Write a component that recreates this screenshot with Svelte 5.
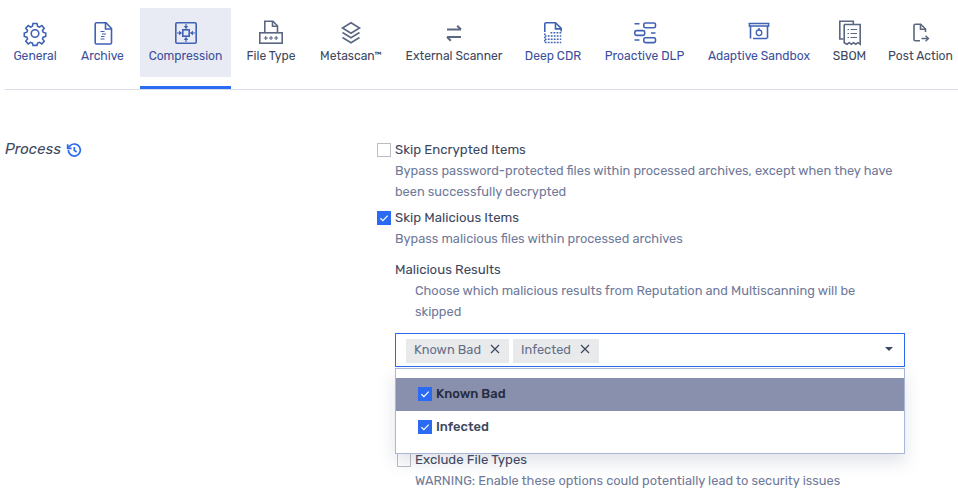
<script lang="ts">
    let tabs = [
        { label: "General", icon: "gear", blue: true },
        { label: "Archive", icon: "archive", blue: true },
        { label: "Compression", icon: "compress", blue: true, active: true },
        { label: "File Type", icon: "filetype" },
        { label: "Metascan™", icon: "layers" },
        { label: "External Scanner", icon: "swap" },
        { label: "Deep CDR", icon: "cdr", blue: true },
        { label: "Proactive DLP", icon: "dlp", blue: true },
        { label: "Adaptive Sandbox", icon: "sandbox", blue: true },
        { label: "SBOM", icon: "sbom" },
        { label: "Post Action", icon: "post" },
    ];

    let selected = ["Known Bad", "Infected"];
</script>

{#snippet check(on: boolean)}
    <span class="box" class:on>
        {#if on}
            <svg viewBox="0 0 14 14" width="14" height="14"><path d="M3.4 7.2l2.5 2.4 4.8-5" fill="none" stroke="#fff" stroke-width="1.2" /></svg>
        {/if}
    </span>
{/snippet}

{#snippet tabIcon(name: string)}
    <svg viewBox="0 0 24 24" width="24" height="24" fill="none" stroke="currentColor" stroke-width="1.6">
        {#if name === "gear"}
            <path d="M10 2.500h4l.6 2.800 1.800.8 2.400-1.600 2.400 2.800-1.700 2.200.6 1.700 2.600.8v3.400l-2.600.8-.6 1.700 1.700 2.200-2.400 2.800-2.400-1.600-1.800.8-.6 2.300h-4l-.6-2.300-1.800-.8-2.400 1.600-2.400-2.800 1.700-2.200-.6-1.700-2.600-.8v-3.400l2.600-.8.6-1.700-1.700-2.200 2.400-2.800 2.400 1.600 1.800-.8z" />
            <circle cx="12" cy="12.500" r="3.800" />
        {:else if name === "archive"}
            <path d="M5.500 1.800h9.500l5.500 5.700v14.200a1.300 1.300 0 0 1-1.300 1.300H5.500a1.300 1.300 0 0 1-1.300-1.300V3.100a1.300 1.300 0 0 1 1.300-1.300z" />
            <path d="M14.500 1.800v6.200h6" />
            <path d="M9.500 10.500h4M11 13h4M10 15.500h3.500M9.500 18h4" stroke-width="1.200" />
        {:else if name === "compress"}
            <rect x="1.800" y="1.800" width="20.400" height="20.400" rx="1.200" />
            <rect x="8.800" y="8.800" width="6.400" height="6.400" />
            <path d="M3 12h2M19 12h2M12 3v2M12 19v2" stroke-width="1.200" />
            <path d="M8.200 12L5 9.800v4.400zM15.800 12L19 9.800v4.400zM12 8.200L9.800 5h4.400zM12 15.800L9.800 19h4.400z" fill="currentColor" stroke="none" />
        {:else if name === "filetype"}
            <path d="M5.800 11.500V0.300h8.200l4.500 4.700v6.500" />
            <path d="M13.500 0.300v5h5" />
            <rect x="0.800" y="11.800" width="22.400" height="10.400" />
            <path d="M4.800 17h4M6.800 15v4M10 17h4M12 15v4M15.200 17h4M17.200 15v4" stroke-width="1.100" />
        {:else if name === "layers"}
            <path d="M12 1.800l8.500 5.200-8.500 5.200-8.500-5.200z" />
            <path d="M3.500 11.500l8.500 5.200 8.500-5.200M3.500 16.500l8.500 5.200 8.500-5.200" />
        {:else if name === "swap"}
            <path d="M5 8.500h14M15.200 4.700L19 8.500M5 16h14M5 16l3.800 3.800" stroke-width="2" />
        {:else if name === "cdr"}
            <path d="M3.800 11V3a1.300 1.300 0 0 1 1.300-1.300h9.400l5.700 5.700v3" />
            <path d="M14.500 1.700v6.200h6" />
            <path d="M9.500 11.800h11M3.800 15h16.400M3.800 18.200h16.400M3.800 21.500h16.400" stroke-dasharray="1.800 1.200" stroke-width="1.400" />
            <path d="M3.800 12.500v9" stroke-dasharray="1.600 1.600" />
        {:else if name === "dlp"}
            <path d="M1.500 2.800h5M18 12h4.500M1.500 19h5" />
            <rect x="10.800" y="2" width="11.700" height="4.800" rx="1.600" />
            <rect x="1.800" y="9.600" width="9.900" height="4.800" rx="1.600" />
            <rect x="10.800" y="16.800" width="11.700" height="4.800" rx="1.600" />
        {:else if name === "sandbox"}
            <path d="M1.500 2.500h21M2.500 2.500v3M21.500 2.500v3M1.500 5h21" stroke-width="1.300" />
            <path d="M3.500 5v12.500M20.500 5v12.500M6 17.500h14" />
            <circle cx="12" cy="11.800" r="2.800" stroke-width="1.300" />
            <path d="M11 8h2" stroke-width="1.300" />
        {:else if name === "sbom"}
            <path d="M5.500 18H1.800V0.300h13.500V3" />
            <path d="M6 3.500h16.200v19.700l-2.200-1.500-2.200 1.500-2.200-1.500-2.200 1.500-2.200-1.500-2.200 1.500-2.800-1.500V3.500z" />
            <path d="M9.500 8.500h1.500M12.500 8.500h6.500M9.500 12.500h1.500M12.500 12.500h6.500M9.500 16.500h1.500M12.500 16.500h6.500" stroke-width="1.200" />
        {:else if name === "post"}
            <path d="M16.500 11V8l-4.800-4.800H6.300A1.300 1.300 0 0 0 5 4.500v14a1.300 1.300 0 0 0 1.300 1.300H11" />
            <path d="M11.500 3.200v5h5" />
            <path d="M12.500 17.500h6.500M16.500 14.800l3 2.700-3 2.700" stroke-width="1.400" />
        {/if}
    </svg>
{/snippet}

<div class="page">
    <nav class="tabs">
        {#each tabs as tab}
            <div class="tab" class:active={tab.active} class:blue={tab.blue}>
                {@render tabIcon(tab.icon)}
                <span>{tab.label}</span>
            </div>
        {/each}
    </nav>

    <section class="form">
        <div class="label">
            <em>Process</em>
            <svg viewBox="0 0 24 24" width="16" height="16" fill="none" stroke="#2f6bf0" stroke-width="2.600">
                <path d="M3.500 12a9 9 0 1 0 2.800-6.500L2.800 8.800" />
                <path d="M2.500 3.500v6h6" />
                <path d="M12.500 7.500v5l3.500 2.500" />
            </svg>
        </div>

        <div class="fields">
            <div class="check-row">{@render check(false)}Skip Encrypted Items</div>
            <p class="hint indent">Bypass password-protected files within processed archives, except when they have been successfully decrypted</p>

            <div class="check-row">{@render check(true)}Skip Malicious Items</div>
            <p class="hint indent">Bypass malicious files within processed archives</p>

            <div class="nested">
                <div class="title">Malicious Results</div>
                <p class="hint sub">Choose which malicious results from Reputation and Multiscanning will be skipped</p>

                <div class="select">
                    <div class="control">
                        {#each selected as item}
                            <span class="tag">{item}
                                <svg viewBox="0 0 10 10" width="10" height="10"><path d="M1 1l8 8M9 1l-8 8" stroke="#3d4760" stroke-width="1.200" /></svg>
                            </span>
                        {/each}
                        <span class="caret"></span>
                    </div>
                    <div class="menu">
                        <div class="option hover">{@render check(true)}Known Bad</div>
                        <div class="option">{@render check(true)}Infected</div>
                    </div>
                </div>

                <div class="check-row exclude">{@render check(false)}Exclude File Types</div>
                <p class="hint sub-warn">WARNING: Enable these options could potentially lead to security issues</p>
            </div>
        </div>
    </section>
</div>

<style>
    :global(body) {
        overflow: hidden;
        background: #fff;
    }

    .page {
        font-family: "Rubik", "Roboto", "Liberation Sans", sans-serif;
        font-size: 13.2px;
        line-height: 21px;
        color: #3d4760;
        height: 499px;
        overflow: hidden;
    }

    .tabs {
        display: grid;
        grid-template-columns: 60px 59px 91px 64px 80px 110px 72px 95px 118px 47px 79px;
        gap: 8px;
        margin: 8px 0 0 5px;
        border-bottom: 1px solid #d9dce6;
        height: 82px;
        box-sizing: border-box;
    }

    .tab {
        display: flex;
        flex-direction: column;
        align-items: center;
        padding: 13px 0 0;
        height: 69px;
        box-sizing: border-box;
        font-size: 12.1px;
        line-height: 16px;
        color: #3d4760;
        white-space: nowrap;
        position: relative;
    }

    .tab svg {
        margin-bottom: 3px;
        color: #5b6680;
        overflow: visible;
    }

    .tab.blue {
        color: #3b4f9c;
    }

    .tab.blue svg {
        color: #3f62b5;
    }

    .tab.active {
        background: #e8ebf3;
    }

    .tab.active::after {
        content: "";
        position: absolute;
        left: 0;
        right: 0;
        top: 78px;
        height: 3px;
        background: #2b6bf3;
    }

    .form {
        display: grid;
        grid-template-columns: 372px 530px;
        padding: 49px 0 0 5px;
    }

    .label {
        display: flex;
        align-items: center;
        gap: 5px;
        height: 21px;
        font-size: 15px;
    }

    .check-row {
        display: flex;
        align-items: center;
        gap: 4px;
        height: 21px;
    }

    .box {
        width: 14px;
        height: 14px;
        box-sizing: border-box;
        border: 1px solid #b9bdc6;
        background: #fff;
        flex: none;
        display: flex;
    }

    .box.on {
        border: 0;
        background: #2b6bf3;
    }

    .hint {
        margin: 0;
        color: #6f7a9a;
        font-size: 12.8px;
    }

    .indent {
        padding-left: 18px;
        margin-bottom: 5px;
        width: 510px;
    }

    .nested {
        padding-left: 18px;
        margin-top: 10px;
    }

    .sub {
        padding-left: 20px;
        width: 450px;
    }

    .select {
        position: relative;
        width: 510px;
        margin-top: 11px;
    }

    .control {
        display: flex;
        align-items: center;
        gap: 4px;
        height: 34px;
        box-sizing: border-box;
        border: 1px solid #2b6bf3;
        padding-left: 10px;
    }

    .tag {
        display: flex;
        align-items: center;
        gap: 9px;
        height: 24px;
        box-sizing: border-box;
        padding: 0 9px 3px 8px;
        background: #e9eaec;
        color: #666f88;
        font-size: 12.8px;
        margin-top: 1px;
    }

    .caret {
        margin-left: auto;
        margin-right: 11px;
        margin-bottom: 2px;
        border-left: 4px solid transparent;
        border-right: 4px solid transparent;
        border-top: 4px solid #3d4760;
    }

    .menu {
        position: absolute;
        top: 35px;
        left: 0;
        right: 0;
        height: 86px;
        box-sizing: border-box;
        border: 1px solid #a9b6d6;
        padding-top: 9px;
        background: #fff;
        box-shadow: 0 8px 16px rgba(70, 80, 120, 0.16);
        z-index: 2;
    }

    .option {
        display: flex;
        align-items: center;
        gap: 4px;
        height: 33px;
        box-sizing: border-box;
        padding: 0 0 2px 22px;
        font-size: 12.95px;
        font-weight: 500;
    }

    .option.hover {
        background: #8890ae;
        color: #262b3e;
    }

    .exclude {
        margin-top: 82px;
        padding-left: 2px;
    }

    .sub-warn {
        padding-left: 20px;
    }
</style>
